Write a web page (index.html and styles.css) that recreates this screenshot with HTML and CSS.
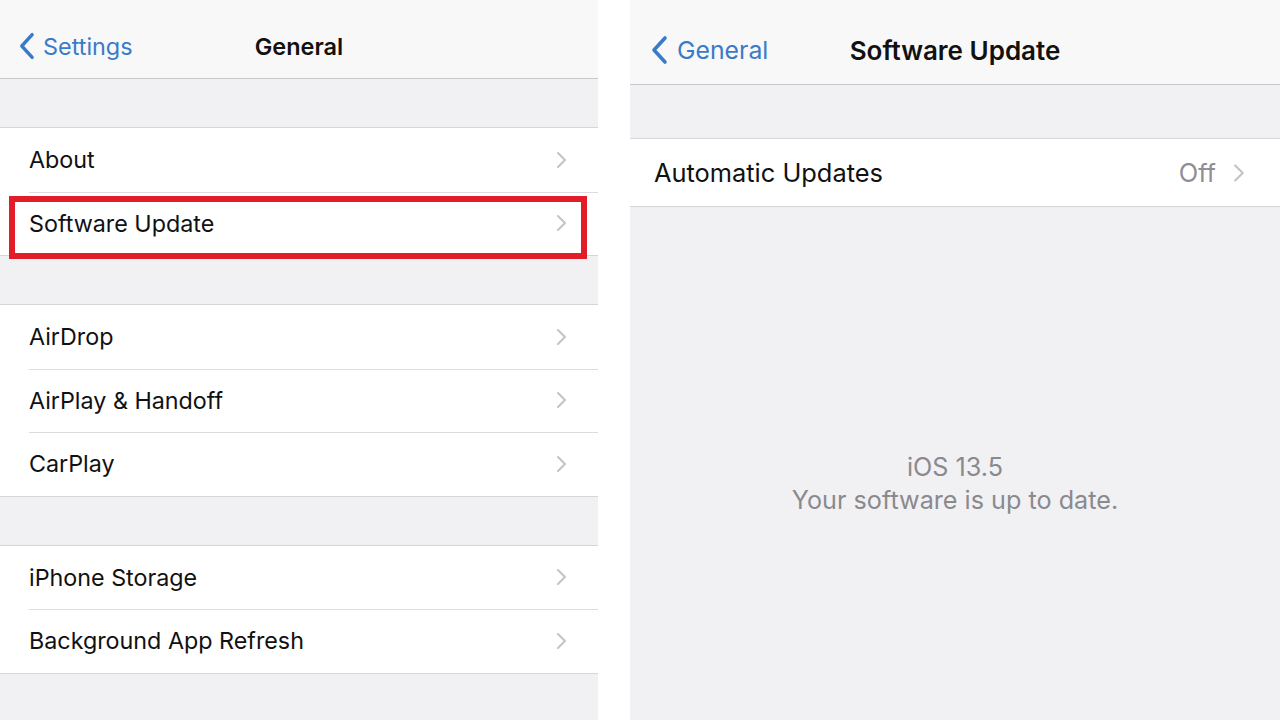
FILE: index.html
```html
<!DOCTYPE html>
<html>
<head>
<meta charset="utf-8">
<link rel="stylesheet" href="styles.css">
</head>
<body>
<div class="screens">
  <section class="panel panel-left">
    <header class="nav">
      <div class="back"><svg class="back-icon" viewBox="0 0 18 30"><path d="M15 3 L4 15 L15 27" /></svg><span>Settings</span></div>
      <div class="title">General</div>
    </header>
    <div class="spacer"></div>
    <div class="group">
      <div class="row"><span class="label">About</span><svg class="chev" viewBox="0 0 12 18"><path d="M2 2 L9 9 L2 16"/></svg></div>
      <div class="row highlighted"><span class="label">Software Update</span><svg class="chev" viewBox="0 0 12 18"><path d="M2 2 L9 9 L2 16"/></svg><div class="mark"></div></div>
    </div>
    <div class="spacer"></div>
    <div class="group">
      <div class="row"><span class="label">AirDrop</span><svg class="chev" viewBox="0 0 12 18"><path d="M2 2 L9 9 L2 16"/></svg></div>
      <div class="row"><span class="label">AirPlay &amp; Handoff</span><svg class="chev" viewBox="0 0 12 18"><path d="M2 2 L9 9 L2 16"/></svg></div>
      <div class="row"><span class="label">CarPlay</span><svg class="chev" viewBox="0 0 12 18"><path d="M2 2 L9 9 L2 16"/></svg></div>
    </div>
    <div class="spacer"></div>
    <div class="group">
      <div class="row"><span class="label">iPhone Storage</span><svg class="chev" viewBox="0 0 12 18"><path d="M2 2 L9 9 L2 16"/></svg></div>
      <div class="row"><span class="label">Background App Refresh</span><svg class="chev" viewBox="0 0 12 18"><path d="M2 2 L9 9 L2 16"/></svg></div>
    </div>
  </section>
  <div class="divider-gap"></div>
  <section class="panel panel-right">
    <header class="nav nav-right">
      <div class="back"><svg class="back-icon" viewBox="0 0 18 30"><path d="M15 3 L4 15 L15 27" /></svg><span>General</span></div>
      <div class="title">Software Update</div>
    </header>
    <div class="spacer spacer-right"></div>
    <div class="group">
      <div class="row row-right"><span class="label">Automatic Updates</span><span class="value">Off</span><svg class="chev" viewBox="0 0 12 18"><path d="M2 2 L9 9 L2 16"/></svg></div>
    </div>
    <div class="status">
      <div>iOS 13.5</div>
      <div>Your software is up to date.</div>
    </div>
  </section>
</div>
</body>
</html>
```

FILE: styles.css
```css
* { box-sizing: border-box; }
html, body { margin: 0; padding: 0; }
body {
  width: 1280px;
  height: 720px;
  overflow: hidden;
  background: #ffffff;
  font-family: "Inter", "Liberation Sans", sans-serif;
  color: #111;
}
.screens {
  display: flex;
  height: 720px;
}
.panel {
  background: #f1f1f4;
  display: flex;
  flex-direction: column;
  height: 720px;
}
.panel-left { width: 598px; }
.divider-gap { width: 32px; background: #fff; }
.panel-right { flex: 1; }

.nav {
  height: 79px;
  background: #f8f8f8;
  border-bottom: 1px solid #c9c9cc;
  display: flex;
  align-items: center;
  position: relative;
  padding-left: 18px;
  padding-top: 14px;
}
.nav-right { height: 85px; padding-left: 20px; padding-top: 16px; }
.back {
  display: flex;
  align-items: center;
  color: #3a7bc8;
  font-size: 23.4px;
  gap: 8px;
}
.nav-right .back { font-size: 24.8px; gap: 9px; }
.back-icon { width: 17px; height: 30px; }
.nav-right .back-icon { width: 18px; height: 32px; }
.back-icon path { fill: none; stroke: #3a7bc8; stroke-width: 3.6; stroke-linecap: round; stroke-linejoin: round; }
.title {
  position: absolute;
  left: 0; right: 0;
  top: 0; bottom: 0;
  padding-top: 14px;
  display: flex;
  align-items: center;
  justify-content: center;
  font-weight: 600;
  font-size: 23.5px;
  pointer-events: none;
}
.nav-right .title { font-size: 26px; padding-top: 16px; }
.spacer { height: 49px; border-bottom: 1px solid #d6d6da; }
.spacer-right { height: 54px; }
.group {
  background: #fff;
  border-bottom: 1px solid #d6d6da;
}
.row {
  height: 63.5px;
  display: flex;
  align-items: center;
  padding-left: 29px;
  padding-right: 30px;
  position: relative;
  font-size: 23.3px;
}
.row + .row::before {
  content: "";
  position: absolute;
  top: 0; left: 29px; right: 0;
  border-top: 1px solid #dcdce0;
}
.label { flex: 1; }
.chev { width: 12px; height: 18px; }
.chev path { fill: none; stroke: #c4c4c8; stroke-width: 2; stroke-linecap: round; stroke-linejoin: round; }
.mark {
  position: absolute;
  left: 9px;
  top: 4px;
  width: 578px;
  height: 63px;
  border: 6px solid #e21d2a;
}
.row-right {
  height: 67px;
  padding-left: 24px;
  padding-right: 34px;
  font-size: 25.4px;
}
.value { color: #8e8e93; margin-right: 17px; }
.row-right .chev { width: 13px; height: 20px; }
.status {
  flex: 1;
  display: flex;
  flex-direction: column;
  align-items: center;
  justify-content: center;
  color: #8a8a8e;
  font-size: 25.2px;
  line-height: 33px;
  padding-top: 41px;
}
```
